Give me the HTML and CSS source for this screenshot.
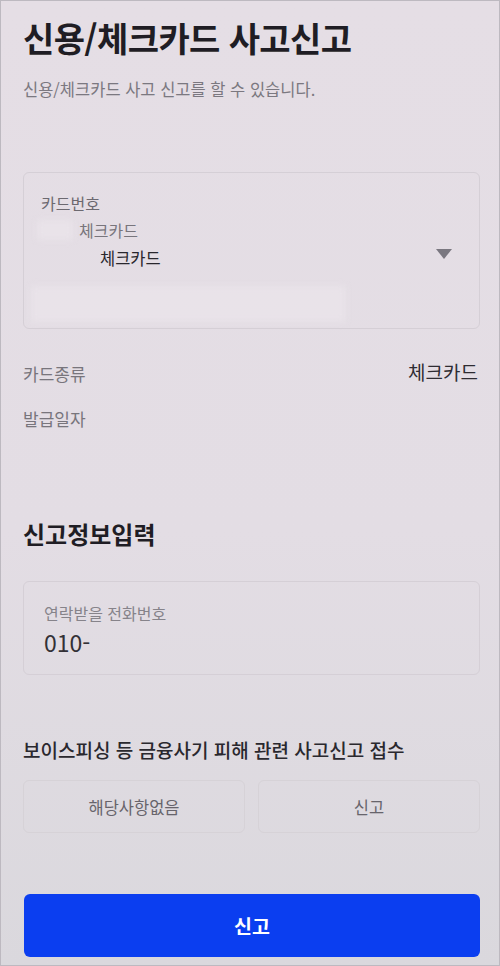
FILE: index.html
```html
<!DOCTYPE html>
<html lang="ko">
<head>
  <meta charset="UTF-8">
  <meta name="viewport" content="width=device-width, initial-scale=1.0">
  <title>신용/체크카드 사고신고</title>
  <link rel="stylesheet" href="styles.css">
</head>
<body>
  <div class="screen">
    <header class="page-head">
      <h1>신용/체크카드 사고신고</h1>
      <p>신용/체크카드 사고 신고를 할 수 있습니다.</p>
    </header>

    <!-- Card select -->
    <div class="card-select">
      <div class="card-select-body">
        <div class="field-label">카드번호</div>
        <div class="card-line sub">
          <span class="mask mask-small"></span>
          <span>체크카드</span>
        </div>
        <div class="card-line main">체크카드</div>
        <div class="mask mask-wide"></div>
      </div>
      <span class="caret"></span>
    </div>

    <div class="info-list">
      <div class="info-row">
        <span class="info-key">카드종류</span>
        <span class="info-value">체크카드</span>
      </div>
      <div class="info-row">
        <span class="info-key">발급일자</span>
        <span class="info-value"></span>
      </div>
    </div>

    <h2 class="section-title">신고정보입력</h2>

    <div class="input-box">
      <div class="input-label">연락받을 전화번호</div>
      <div class="input-value">010-</div>
    </div>

    <div class="question">보이스피싱 등 금융사기 피해 관련 사고신고 접수</div>
    <div class="choice-group">
      <button class="choice">해당사항없음</button>
      <button class="choice">신고</button>
    </div>

    <button class="submit">신고</button>
  </div>
</body>
</html>
```

FILE: styles.css
```css
/* Global */
html, body {
  margin: 0;
  padding: 0;
}
body {
  font-family: "Noto Sans CJK KR", "Noto Sans", sans-serif;
  color: #333;
  background: #c9c6cc;
}
.screen {
  box-sizing: border-box;
  width: 500px;
  height: 966px;
  padding: 16px 19px 0 22px;
  border: 1px solid #bdb9c0;
  background: linear-gradient(180deg, #e5dee5 0%, #e3dde4 55%, #dad8dd 100%);
  display: flex;
  flex-direction: column;
}

/* Header */
.page-head h1 {
  margin: 0;
  font-size: 34px;
  font-weight: 700;
  line-height: 42px;
  color: #1f1d24;
  letter-spacing: -0.6px;
}
.page-head p {
  margin: 18px 0 0;
  font-size: 16.5px;
  line-height: 24px;
  color: #7b7880;
}

/* Card select */
.card-select {
  margin-top: 71px;
  height: 157px;
  box-sizing: border-box;
  border: 1px solid #d5cfd6;
  border-radius: 6px;
  padding: 17px 27px 0 17px;
  display: flex;
  justify-content: space-between;
}
.card-select-body {
  flex: 1;
}
.field-label {
  font-size: 16px;
  line-height: 26px;
  color: #6c6970;
}
.card-line {
  font-size: 16px;
  line-height: 28px;
  display: flex;
  align-items: center;
}
.card-line.sub {
  color: #78757c;
  margin-left: -4px;
}
.card-line.main {
  color: #29272d;
  padding-left: 59px;
  font-size: 16.5px;
}
.mask {
  background: rgba(236, 232, 237, 0.55);
  filter: blur(3px);
}
.mask-small {
  width: 36px;
  height: 20px;
  margin-right: 6px;
}
.mask-wide {
  margin: 14px 0 0 -10px;
  width: 315px;
  height: 36px;
}
.caret {
  margin-top: 59px;
  width: 0;
  height: 0;
  border-left: 8px solid transparent;
  border-right: 8px solid transparent;
  border-top: 10px solid #7a7780;
}

/* Info rows */
.info-list {
  margin-top: 22px;
}
.info-row {
  display: flex;
  justify-content: space-between;
  align-items: center;
  height: 45px;
}
.info-key {
  font-size: 17px;
  color: #78757c;
}
.info-value {
  font-size: 19px;
  color: #2e2c32;
  margin-top: -4px;
  margin-right: 2px;
}

/* Section */
.section-title {
  margin: 78px 0 0;
  font-size: 24px;
  font-weight: 700;
  line-height: 30px;
  color: #1f1d24;
}
.input-box {
  margin-top: 32px;
  height: 94px;
  box-sizing: border-box;
  border: 1px solid #d5cfd6;
  border-radius: 6px;
  padding: 20px 20px 0;
}
.input-label {
  font-size: 16px;
  line-height: 22px;
  color: #86838a;
}
.input-value {
  margin-top: 4px;
  font-size: 23px;
  line-height: 28px;
  color: #333136;
}

/* Question */
.question {
  margin-top: 62px;
  font-size: 19px;
  font-weight: 500;
  line-height: 26px;
  color: #2a282e;
}
.choice-group {
  margin-top: 17px;
  display: grid;
  grid-template-columns: 1fr 1fr;
  gap: 13px;
}
.choice {
  height: 53px;
  border: 1px solid #d6d2d7;
  border-radius: 6px;
  background: transparent;
  font-family: inherit;
  font-size: 16.5px;
  color: #67646b;
  cursor: pointer;
}

/* Submit */
.submit {
  margin: 61px 0 0 1px;
  height: 63px;
  border: none;
  border-radius: 6px;
  background: #0b3ef0;
  color: #fff;
  font-family: inherit;
  font-size: 19.5px;
  font-weight: 700;
  cursor: pointer;
}
```
